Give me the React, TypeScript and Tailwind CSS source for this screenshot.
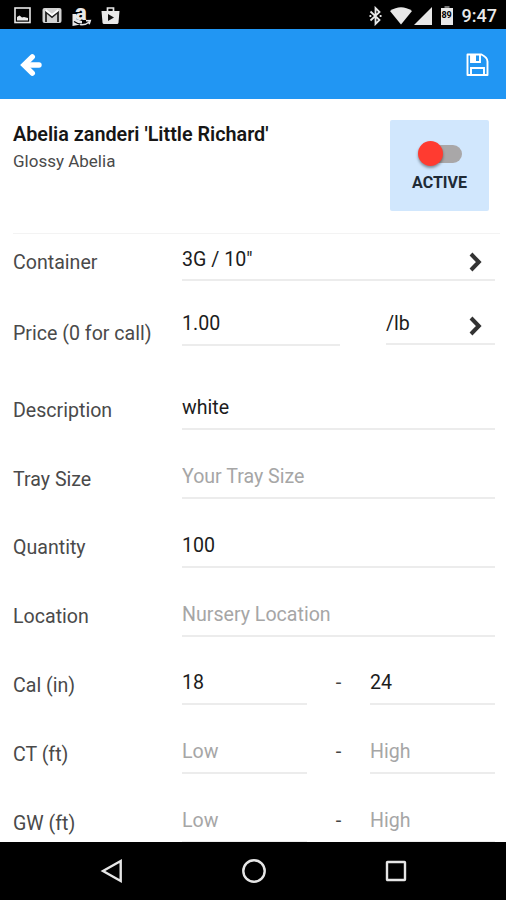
import { useState } from 'react'
import type { ReactNode } from 'react'

interface FieldProps {
  value?: string
  placeholder?: string
  className?: string
}

const inputClass =
  'block h-full w-full bg-transparent p-0 pt-[1px] text-[19.6px] text-[#1c1c1c] outline-none placeholder:text-[#a6a6a6] placeholder:opacity-100'

function Field({ value, placeholder, className = '' }: FieldProps) {
  const [text, setText] = useState(value ?? '')

  return (
    <div className={`h-[44px] border-b-2 border-[#ececec] ${className}`}>
      <input
        value={text}
        placeholder={placeholder}
        onChange={(e) => setText(e.target.value)}
        className={inputClass}
      />
    </div>
  )
}

function Picker({ value, className = '' }: { value: string; className?: string }) {
  return (
    <button
      type="button"
      className={`flex h-[44px] items-center justify-between border-b-2 border-[#ececec] pr-[13px] text-left text-[19.6px] text-[#1c1c1c] ${className}`}
    >
      <span className="pt-[3px]">{value}</span>
      <svg width="13" height="20" viewBox="0 0 13 20" fill="none" className="mt-[7px]">
        <path d="M2 2 9.800 10 2 18" stroke="#333" strokeWidth="4" />
      </svg>
    </button>
  )
}

function Row({ label, children }: { label: string; children: ReactNode }) {
  return (
    <div className="flex h-[68.9px] shrink-0 items-end">
      <label className="flex h-[39px] w-[169px] shrink-0 items-center text-[19.6px] text-[#4a4a4a]">
        {label}
      </label>
      {children}
    </div>
  )
}

function RangeRow({ label, low, high }: { label: string; low?: string; high?: string }) {
  return (
    <Row label={label}>
      <Field value={low} placeholder="Low" className="w-[125px]" />
      <span className="flex h-[46px] w-[63px] items-center justify-center text-[20px] text-[#444]">-</span>
      <Field value={high} placeholder="High" className="w-[125px]" />
    </Row>
  )
}

function StatusBar() {
  return (
    <div className="flex h-[29px] shrink-0 items-center justify-between bg-black pt-[2px] pr-[9px] pl-[14px] text-[#e8e8e8]">
      <div className="flex items-center">
        <svg width="17" height="17" viewBox="0 0 17 17">
          <rect x="1" y="1" width="15" height="14.5" fill="none" stroke="currentColor" strokeWidth="1.6" />
          <path d="M3 13.5V10l2.500-1.500 2.500 2 2-.5 4 1v2.500z" fill="currentColor" />
        </svg>
        <svg width="20" height="17" viewBox="0 0 20 17" className="ml-[11px]">
          <rect x="0.5" y="1" width="19" height="15" rx="2" fill="#d2d2d2" />
          <path d="M4 15V5l6 5 6-5v10" fill="none" stroke="#222" strokeWidth="1.8" />
          <path d="m3.500 3 6.500 5 6.500-5" fill="none" stroke="#fff" strokeWidth="1.8" />
        </svg>
        <div className="ml-[10px] grid h-[22px] w-[20px]">
          <svg width="20" height="22" viewBox="0 0 20 22" className="col-start-1 row-start-1">
            <path d="M0.500 9h3.500v5l6 2v3l-4 1-5.500 1z" fill="currentColor" />
            <path d="M2 16.500c5 3.500 10 3.500 14.500.5" fill="none" stroke="#000" strokeWidth="1.200" />
            <path d="M8 19.600c4 .5 7-.6 9.200-2.600M14 15.800l4.300-.3-1.200 3.800" fill="none" stroke="currentColor" strokeWidth="1.500" />
          </svg>
          <span className="col-start-1 row-start-1 -mt-[5px] pl-[3px] text-[22px] leading-[26px] font-black">a</span>
        </div>
        <svg width="19" height="19" viewBox="0 0 19 19" className="ml-[9px]">
          <path d="M6.500 5V2h6v3" fill="none" stroke="currentColor" strokeWidth="1.700" />
          <path d="M0.500 5h18l-1 11.500q-.2 1.500-1.500 1.500H3q-1.300 0-1.500-1.500z" fill="currentColor" />
          <path d="m7 8 6 3.500L7 15z" fill="#111" />
        </svg>
      </div>
      <div className="flex items-center">
        <svg width="13" height="20" viewBox="0 0 13 20" fill="none" stroke="currentColor" strokeWidth="1.800">
          <path d="m1.500 5.500 9 8.500-4 4V2l4 4-9 8.500" />
          <path d="M0.500 10h1.800M10.700 10h1.800" />
        </svg>
        <svg width="22" height="18" viewBox="0 0 22 18" className="ml-[8px]">
          <path d="M0 4Q11-3.500 22 4L11 17.500z" fill="currentColor" />
        </svg>
        <svg width="18" height="18" viewBox="0 0 18 18" className="ml-[2px]">
          <path d="M0 18 18 0v18z" fill="currentColor" />
        </svg>
        <div className="ml-[9px] grid h-[19px] w-[12px]">
          <svg width="12" height="19" viewBox="0 0 12 19" className="col-start-1 row-start-1">
            <path d="M3.500 0h5v2h-5z" fill="#777" />
            <path d="M0 2h12v17H0z" fill="currentColor" />
          </svg>
          <span className="col-start-1 row-start-1 pt-[4px] text-center text-[9px] leading-[11px] font-bold text-black">89</span>
        </div>
        <span className="ml-[9px] text-[18px] leading-[22px] font-medium">9:47</span>
      </div>
    </div>
  )
}

function Header() {
  return (
    <header className="flex h-[70px] shrink-0 items-center justify-between bg-[#2196f3] pt-[1px] pr-[17px] pl-[20px]">
      <button type="button" aria-label="Back">
        <svg width="23" height="24" viewBox="0 0 23 24" fill="none" stroke="#fff">
          <path d="M12.300 3.800 4 12l8.300 8.200" strokeWidth="5.400" strokeLinecap="round" strokeLinejoin="miter" />
          <path d="M5 12h14" strokeWidth="5.400" strokeLinecap="round" />
        </svg>
      </button>
      <button type="button" aria-label="Save">
        <svg width="23" height="24" viewBox="0 0 23 24" fill="none" stroke="#fff" strokeWidth="1.900">
          <path d="M1.500 1.500H15.500Q21.500 4.500 21.500 8.500V22H1.500z" strokeLinejoin="round" />
          <path d="M5 22v-7h13v7" />
          <path d="M5 2v7h9V2" />
          <path d="M5 2h5v7H5z" fill="#fff" stroke="none" />
        </svg>
      </button>
    </header>
  )
}

function ActiveToggle() {
  const [active, setActive] = useState(false)

  return (
    <button
      type="button"
      onClick={() => setActive(!active)}
      className="flex h-[91px] w-[99px] flex-col items-center rounded-[2px] bg-[#d1e7fd] pt-[21px]"
    >
      <span className="relative flex h-[25px] w-[44px] items-center">
        <span className="ml-[12px] h-[18px] w-[32px] rounded-full bg-[#a9a7a8]" />
        <span
          className={`absolute top-0 h-[25px] w-[25px] rounded-full bg-[#ff3b30] shadow-[0_2px_3px_rgba(0,0,0,0.4)] ${active ? 'right-0' : 'left-0'}`}
        />
      </span>
      <span className="mt-[6px] text-[16px] leading-[22px] font-bold text-[#202a35]">ACTIVE</span>
    </button>
  )
}

function NavBar() {
  return (
    <nav className="flex h-[58px] shrink-0 items-center justify-between bg-black pr-[99px] pl-[100px]">
      <svg width="23" height="26" viewBox="0 0 23 26" fill="none" stroke="#e6e6e6" strokeWidth="2.400">
        <path d="M20.700 3v20L3 13z" />
      </svg>
      <svg width="26" height="26" viewBox="0 0 26 26" fill="none" stroke="#e6e6e6" strokeWidth="2.400">
        <circle cx="13" cy="13" r="10.700" />
      </svg>
      <svg width="22" height="22" viewBox="0 0 22 22" fill="none" stroke="#e6e6e6" strokeWidth="2.400">
        <rect x="2" y="2" width="18" height="18" rx="0.500" />
      </svg>
    </nav>
  )
}

export default function App() {
  return (
    <div className="flex h-[900px] w-[506px] flex-col overflow-hidden bg-white font-['Roboto',sans-serif]">
      <StatusBar />
      <Header />
      <main className="flex min-h-0 flex-1 flex-col overflow-hidden pl-[13px]">
        <section className="mr-[6px] flex h-[135px] shrink-0 justify-between border-b border-[#f3f3f3] pt-[21px] pr-[11px]">
          <div>
            <h1 className="mt-[2px] text-[19.8px] leading-[26px] font-semibold text-[#161616]">
              Abelia zanderi 'Little Richard'
            </h1>
            <p className="mt-[2px] text-[17px] leading-[22px] text-[#4a4a4a]">Glossy Abelia</p>
          </div>
          <ActiveToggle />
        </section>

        <div className="flex h-[47px] shrink-0 items-end">
          <label className="flex h-[37px] w-[169px] items-center text-[19.6px] text-[#4a4a4a]">
            Container
          </label>
          <Picker value={'3G / 10"'} className="w-[313px]" />
        </div>
        <div className="flex h-[65px] shrink-0 items-end">
          <label className="flex h-[24px] w-[169px] items-center text-[19.6px] text-[#4a4a4a]">
            Price (0 for call)
          </label>
          <Field value="1.00" className="w-[158px]" />
          <Picker value="/lb" className="mb-[1px] ml-[46px] w-[109px]" />
        </div>

        <div className="mt-[15px] flex flex-col">
          <Row label="Description">
            <Field value="white" className="w-[313px]" />
          </Row>
          <Row label="Tray Size">
            <Field placeholder="Your Tray Size" className="w-[313px]" />
          </Row>
          <Row label="Quantity">
            <Field value="100" className="w-[313px]" />
          </Row>
          <Row label="Location">
            <Field placeholder="Nursery Location" className="w-[313px]" />
          </Row>
          <RangeRow label="Cal (in)" low="18" high="24" />
          <RangeRow label="CT (ft)" />
          <RangeRow label="GW (ft)" />
        </div>
      </main>
      <NavBar />
    </div>
  )
}
